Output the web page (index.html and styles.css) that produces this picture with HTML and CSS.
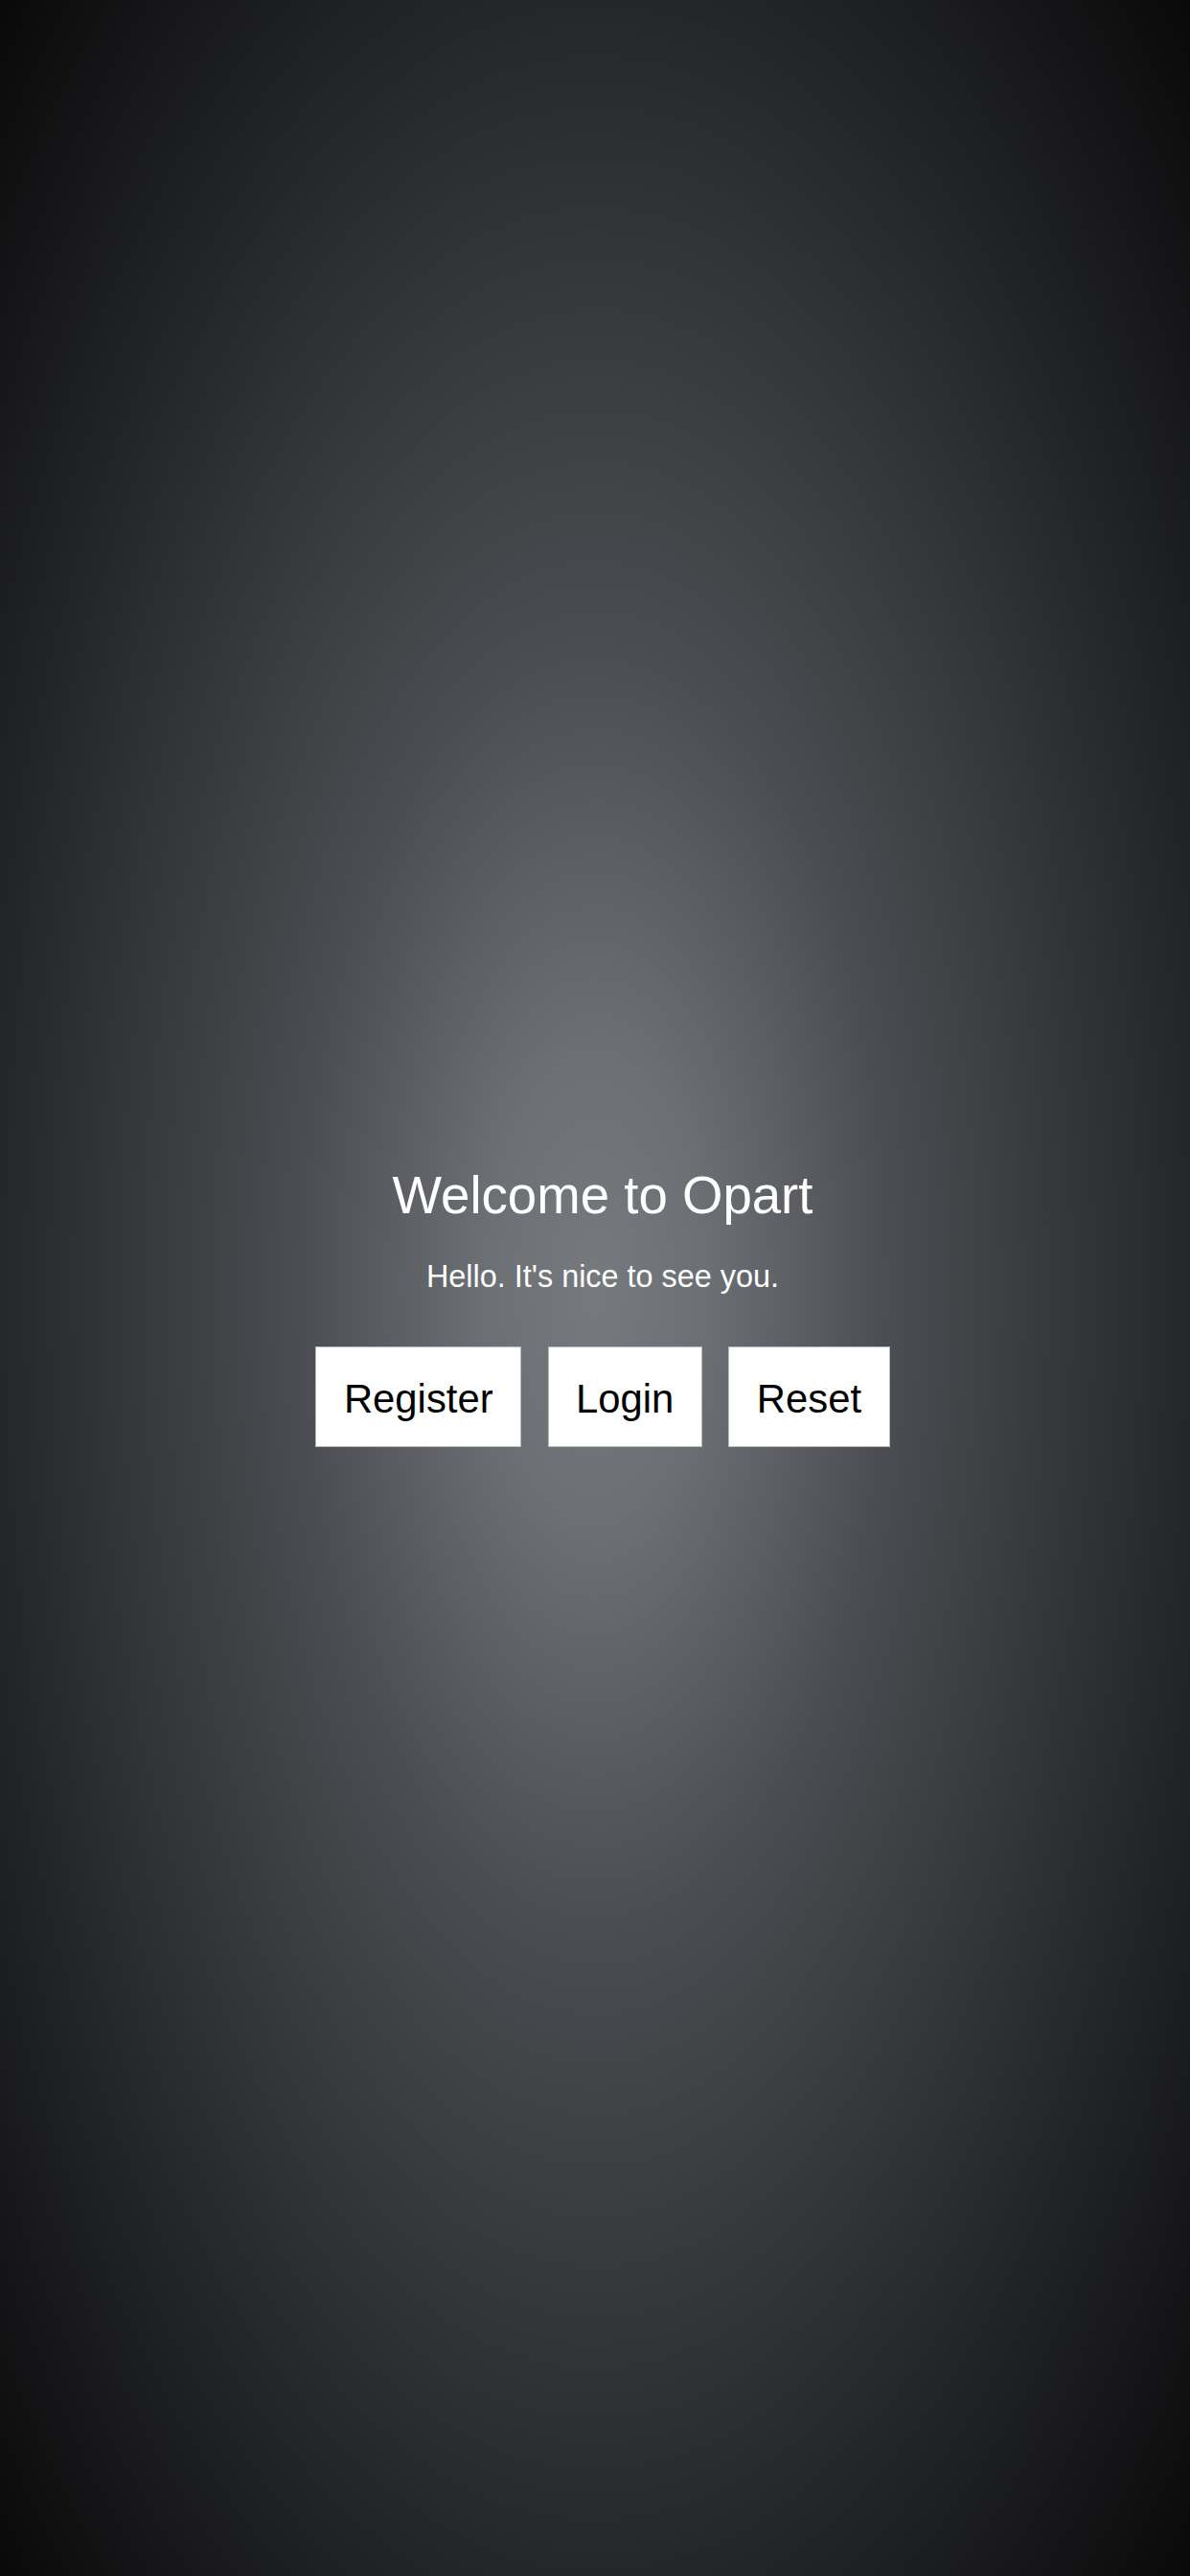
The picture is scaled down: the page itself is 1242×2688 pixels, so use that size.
FILE: index.html
```html
<!DOCTYPE html>
<html lang="en">
<head>
<meta charset="utf-8">
<title>Opart</title>
<link rel="stylesheet" href="styles.css">
</head>
<body>
<main class="welcome">
  <h1 class="welcome-title">Welcome to Opart</h1>
  <p class="welcome-sub">Hello. It's nice to see you.</p>
  <div class="actions">
    <button class="btn" type="button">Register</button>
    <button class="btn" type="button">Login</button>
    <button class="btn" type="button">Reset</button>
  </div>
</main>
</body>
</html>
```
FILE: styles.css
```css
html, body {
  margin: 0;
  padding: 0;
  height: 100%;
}

body {
  min-height: 2688px;
  background: radial-gradient(ellipse farthest-corner at 50% 50%,
    #76797e 0%,
    #6c6f74 13%,
    #4c4d52 35%,
    #252628 71%,
    #09090a 100%);
  font-family: "Liberation Sans", Arial, sans-serif;
  color: #ffffff;
}

.welcome {
  box-sizing: border-box;
  min-height: 2688px;
  display: flex;
  flex-direction: column;
  align-items: center;
  justify-content: center;
  padding: 39px 0 0 16px;
}

.welcome-title {
  margin: 0;
  font-size: 54.6px;
  font-weight: normal;
  line-height: 62px;
}

.welcome-sub {
  margin: 35px 0 0;
  font-size: 32.4px;
  line-height: 36px;
}

.actions {
  display: flex;
  gap: 27.5px;
  margin-top: 55px;
}

.btn {
  font-family: "Liberation Sans", Arial, sans-serif;
  font-size: 41.8px;
  line-height: 47px;
  color: #000000;
  background: #ffffff;
  border: 1px solid #b8b9bb;
  border-radius: 0;
  padding: 30px 28.5px 26px;
  margin: 0;
}
```
